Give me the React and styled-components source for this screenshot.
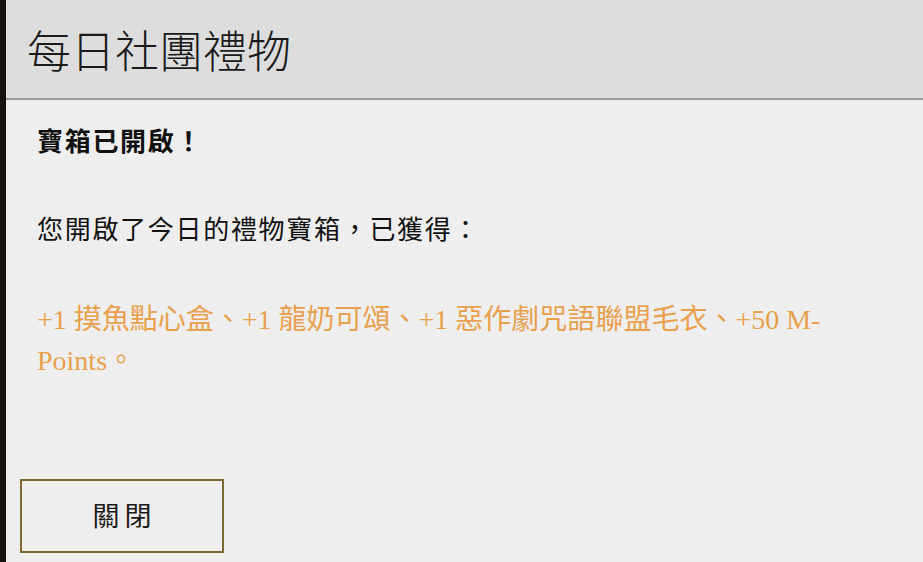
import React from "react"
import styled, { createGlobalStyle } from "styled-components"

const GlobalStyle = createGlobalStyle`
  html, body {
    margin: 0;
    padding: 0;
    background: #16130e;
    overflow: hidden;
  }
  #root {
    height: 562px;
  }
`

const Backdrop = styled.div`
  display: flex;
  height: 562px;
  padding-left: 6px;
  box-sizing: border-box;
`

const Dialog = styled.div`
  flex: 1;
  display: flex;
  flex-direction: column;
  background: #eeeeee;
  font-family: "Noto Sans CJK TC", "Noto Sans", sans-serif;
  color: #111;
`

const Header = styled.div`
  height: 98px;
  display: flex;
  align-items: center;
  padding-left: 21px;
  background: #dddddd;
  border-bottom: 2px solid #9a9a9a;
`

const Title = styled.h1`
  margin: 0;
  font-size: 44px;
  font-weight: 300;
  color: #1a1a1a;
  line-height: 1;
`

const Content = styled.div`
  padding: 20px 31px 0;
`

const Line = styled.p`
  margin: 0 0 ${props => props.gap || 0}px;
  font-size: 26px;
  line-height: 40px;
  font-weight: ${props => (props.bold ? 700 : 400)};
  letter-spacing: 1.7px;
`

const Rewards = styled.p`
  margin: 0;
  font-family: "Liberation Serif", "Noto Sans CJK TC", serif;
  font-size: 28px;
  line-height: 41px;
  color: #e9a04c;
`

const Footer = styled.div`
  padding: 98px 14px 0;
`

const CloseButton = styled.button`
  width: 204px;
  height: 74px;
  box-sizing: border-box;
  padding: 0 0 4px 5px;
  border: 2px solid #7b6a33;
  background: transparent;
  font-family: "Noto Sans CJK TC", sans-serif;
  font-size: 27px;
  color: #1a1a1a;
  cursor: pointer;
  letter-spacing: 5px;
`

export default function App() {
  return (
    <>
      <GlobalStyle />
      <Backdrop>
        <Dialog>
          <Header>
            <Title>每日社團禮物</Title>
          </Header>
          <Content>
            <Line bold gap={48}>寶箱已開啟！</Line>
            <Line gap={51}>您開啟了今日的禮物寶箱，已獲得：</Line>
            <Rewards>
              +1 摸魚點心盒、+1 龍奶可頌、+1 惡作劇咒語聯盟毛衣、+50 M-Points。
            </Rewards>
          </Content>
          <Footer>
            <CloseButton>關閉</CloseButton>
          </Footer>
        </Dialog>
      </Backdrop>
    </>
  )
}
